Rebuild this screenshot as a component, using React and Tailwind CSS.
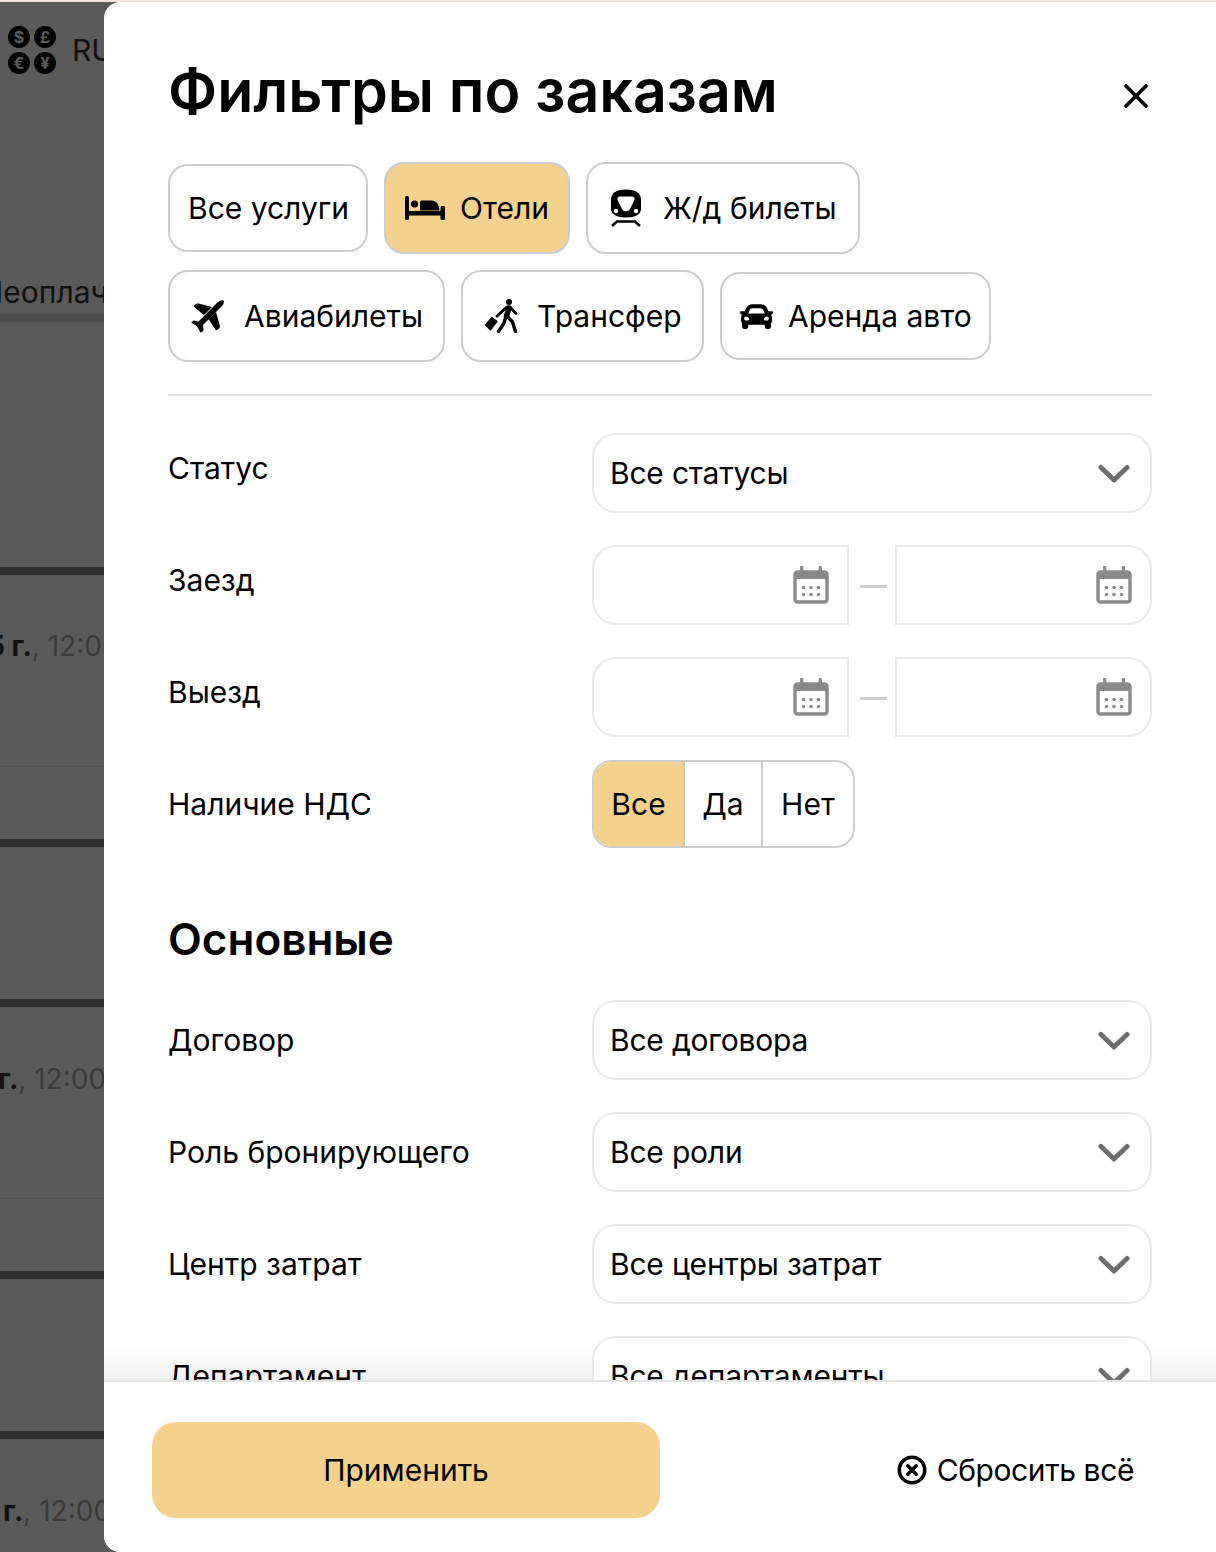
import React from "react";
import { FaCar } from "react-icons/fa";

const BedIcon = () => (
  <svg width="40" height="26" viewBox="0 0 40 26" fill="#000" className="shrink-0">
    <rect x="0" y="1" width="4" height="24" rx="1.5" />
    <rect x="0" y="16" width="40" height="4.5" />
    <rect x="35.5" y="11" width="4.5" height="14" rx="1.5" />
    <circle cx="9.5" cy="9" r="3.6" />
    <path d="M15 15.5V7.5C15 6 16 5.5 17.5 5.5H27C31 5.5 34 9 34.5 15.5Z" />
  </svg>
);

const TrainIcon = () => (
  <svg width="30" height="38" viewBox="10 4 30 38" fill="#000" className="shrink-0">
    <path d="M25 4.5C15 4.5 10 8 10 15V24C10 29 16 32.5 25 32.5C34 32.5 40 29 40 24V15C40 8 35 4.5 25 4.5Z" />
    <path d="M19 11.5H31C33 11.5 34 13 33.5 15L29 24C27.5 27 22.5 27 21 24L16.5 15C16 13 17 11.5 19 11.5Z" fill="#fff" />
    <circle cx="15" cy="26" r="2.2" fill="#fff" />
    <circle cx="35" cy="26" r="2.2" fill="#fff" />
    <path d="M11 41L16 36.5H34L39 41" stroke="#000" strokeWidth="2.6" fill="none" />
  </svg>
);

const PlaneIcon = () => (
  <svg width="34" height="34" viewBox="6 7 34 34" fill="#000" className="shrink-0">
    <path d="M38.5 8.5C36.5 7.5 34 9 32 11L11.5 31.5C10.5 32.8 11.5 35 13.5 35.5C15.5 35.5 17 34 18 33L37 14C38.8 12 39.5 10 38.5 8.5Z" />
    <path d="M27 15L13.5 11.5C11.5 11 9 12.5 8.5 14.5L19 23Z" />
    <path d="M31 20L35 34C35 36 33 38 31 38.5L23.5 27Z" />
    <path d="M16 30L9 28.5C7.5 28.8 6.5 30 6.5 31L13 34.5Z" />
    <path d="M18 32L18.5 38C18 39.5 16.5 40.5 15.5 40.5L12.5 35Z" />
  </svg>
);

const TransferIcon = () => (
  <svg width="34" height="34" viewBox="7 7 34 34" fill="none" className="shrink-0">
    <circle cx="31" cy="10" r="3" fill="#000" />
    <path d="M31 16L28.5 24" stroke="#000" strokeWidth="5.5" strokeLinecap="round" />
    <path d="M29 15L19 24" stroke="#000" strokeWidth="3" strokeLinecap="round" />
    <path d="M32 15L38 21.5" stroke="#000" strokeWidth="2.6" strokeLinecap="round" />
    <path d="M29 24L34.5 30L37.5 39.5" stroke="#000" strokeWidth="3.4" strokeLinecap="round" strokeLinejoin="round" />
    <path d="M28 24L26 31L20.5 39.5" stroke="#000" strokeWidth="3.4" strokeLinecap="round" strokeLinejoin="round" />
    <path d="M8 33L14 26L18.5 29.5L12.5 37.5Z" fill="#000" stroke="#000" strokeWidth="2" strokeLinejoin="round" />
  </svg>
);

const Calendar = () => (
  <svg width="36" height="38" viewBox="0 0 36 38" fill="none" className="shrink-0">
    <rect x="2" y="6" width="32" height="30" rx="2.5" stroke="#8a8a8a" strokeWidth="3.4" />
    <rect x="2" y="6" width="32" height="7" fill="#8a8a8a" />
    <rect x="7" y="0" width="3.4" height="7" rx="1" fill="#8a8a8a" />
    <rect x="25.6" y="0" width="3.4" height="7" rx="1" fill="#8a8a8a" />
    {[10.5, 18, 25.5].map((x) =>
      [21.5, 28.5].map((y) => <circle key={x + "-" + y} cx={x} cy={y} r="1.8" fill="#8a8a8a" />)
    )}
  </svg>
);

const Chevron = () => (
  <svg width="32" height="20" viewBox="0 0 32 20" fill="none" className="mt-[2px] shrink-0">
    <path d="M3 3.5L16 16L29 3.5" stroke="#6e6e6e" strokeWidth="5" strokeLinecap="round" strokeLinejoin="round" />
  </svg>
);

const Chip = ({ children, active, className = "" }) => (
  <div
    className={
      "flex items-center whitespace-nowrap rounded-[20px] border-2 border-[#cccccc] text-[30px] leading-none text-black " +
      (active ? "bg-[#f5d18e] " : "bg-white ") +
      className
    }
  >
    {children}
  </div>
);

const Row = ({ label, children, className = "", labelClass = "pt-[19px]" }) => (
  <div className={"flex items-start " + className}>
    <div className={"w-[424px] shrink-0 text-[30px] leading-[32px] text-black " + labelClass}>{label}</div>
    {children}
  </div>
);

const Select = ({ value }) => (
  <div className="relative z-10 flex h-20 w-[560px] items-center justify-between rounded-[24px] border-2 border-[#e8e8e8] bg-white pl-[16px] pr-[20px] text-[30px] text-black">
    <span className="pt-[1px] tracking-[-0.2px]">{value}</span>
    <Chevron />
  </div>
);

const DateRange = () => (
  <div className="flex w-[560px] items-center">
    <div className="flex h-20 w-[257px] shrink-0 items-center justify-end rounded-l-[24px] border-2 border-[#e8e8e8] pr-[18px]">
      <Calendar />
    </div>
    <div className="ml-[11px] mt-[2px] h-[3px] w-[27px] shrink-0 bg-[#cccccc]" />
    <div className="ml-auto flex h-20 w-[257px] shrink-0 items-center justify-end rounded-r-[24px] border-2 border-[#e8e8e8] pr-[18px]">
      <Calendar />
    </div>
  </div>
);

const Money = ({ s }) => (
  <span className="flex h-[22px] w-[22px] items-center justify-center rounded-full bg-black text-[16px] font-bold leading-none text-[#5b5b5b]">
    {s}
  </span>
);

const Backdrop = () => (
  <div className="flex h-[1552px] w-[104px] shrink-0 flex-col overflow-hidden bg-[#5a5a5a] font-['Inter',sans-serif] text-[30px] leading-none">
    <div className="h-[24px] shrink-0" />
    <div className="flex h-[48px] shrink-0 items-center pl-2">
      <div className="grid w-[48px] shrink-0 grid-cols-2 gap-[4px]">
        <Money s="$" />
        <Money s="£" />
        <Money s="€" />
        <Money s="¥" />
      </div>
      <span className="ml-[16px] text-[#111111]">RU</span>
    </div>
    <div className="mt-[203px] flex h-[30px] shrink-0 items-center overflow-hidden whitespace-nowrap text-[#111111]">
      <span className="ml-[-19px]">Неоплач</span>
    </div>
    <div className="mt-[7px] h-2 shrink-0 bg-[#4d4d4d]" />
    <div className="h-[245px] shrink-0" />
    <div className="h-2 shrink-0 bg-[#2f2f2f]" />
    <div className="flex h-[140px] shrink-0 items-center overflow-hidden whitespace-nowrap pt-[2px] text-[28px]">
      <span className="ml-[-13px] font-bold text-[#111111]">5 г.</span>
      <span className="text-[#3a3a3a]">, 12:00</span>
    </div>
    <div className="h-[52px] shrink-0 border-b border-[#525252]" />
    <div className="h-[72px] shrink-0" />
    <div className="h-2 shrink-0 bg-[#2f2f2f]" />
    <div className="h-[152px] shrink-0" />
    <div className="h-2 shrink-0 bg-[#2f2f2f]" />
    <div className="flex h-[140px] shrink-0 items-center overflow-hidden whitespace-nowrap pt-[3px] text-[28px]">
      <span className="ml-[-2px] font-bold text-[#111111]">г.</span>
      <span className="text-[#3a3a3a]">, 12:00</span>
    </div>
    <div className="h-[52px] shrink-0 border-b border-[#525252]" />
    <div className="h-[72px] shrink-0" />
    <div className="h-2 shrink-0 bg-[#2f2f2f]" />
    <div className="h-[152px] shrink-0" />
    <div className="h-2 shrink-0 bg-[#2f2f2f]" />
    <div className="flex h-[140px] shrink-0 items-center overflow-hidden whitespace-nowrap pl-[3px] pt-[3px] text-[28px]">
      <span className="font-bold text-[#111111]">г.</span>
      <span className="text-[#3a3a3a]">, 12:00</span>
    </div>
  </div>
);

export default function App() {
  return (
    <div className="flex h-[1552px] w-[1216px] flex-col overflow-hidden bg-[#5a5a5a] font-['Inter',sans-serif]">
      <div className="h-[2px] shrink-0 bg-[#f3e4e4]" />
      <div className="flex min-h-0 flex-1 overflow-hidden">
        <Backdrop />
        <div className="flex min-w-0 flex-1 flex-col overflow-hidden rounded-l-[16px] bg-white">
          <div className="relative min-h-0 flex-1 overflow-hidden pl-16 pr-16">
            <div className="flex h-[160px] items-start justify-between">
              <h1 className="mt-[53px] whitespace-nowrap text-[59px] font-semibold leading-[72px] text-black">Фильтры по заказам</h1>
              <svg width="26" height="26" viewBox="0 0 26 26" className="mr-[3px] mt-[81px] shrink-0" fill="none">
                <path d="M3 3L23 23M23 3L3 23" stroke="#000" strokeWidth="3.6" strokeLinecap="round" />
              </svg>
            </div>

            <div className="flex items-center gap-4">
              <Chip className="h-[88px] w-[200px] pl-[18px]">Все услуги</Chip>
              <Chip active className="h-[92px] w-[186px] gap-[15px] pl-[19px]">
                <BedIcon />
                Отели
              </Chip>
              <Chip className="h-[92px] w-[274px] gap-[22px] pl-[23px]">
                <TrainIcon />
                Ж/д билеты
              </Chip>
            </div>
            <div className="mt-4 flex items-center gap-4">
              <Chip className="h-[92px] w-[277px] gap-[19px] pl-[21px]">
                <PlaneIcon />
                Авиабилеты
              </Chip>
              <Chip className="h-[92px] w-[243px] gap-[18px] pl-[22px]">
                <TransferIcon />
                Трансфер
              </Chip>
              <Chip className="h-[88px] w-[271px] gap-[15px] pl-[18px]">
                <FaCar className="shrink-0 text-[33px]" />
                Аренда авто
              </Chip>
            </div>

            <div className="mt-[32px] h-[2px] bg-[#e5e5e5]" />

            <Row label="Статус" className="mt-[37px]">
              <Select value="Все статусы" />
            </Row>
            <Row label="Заезд" className="mt-8">
              <DateRange />
            </Row>
            <Row label="Выезд" className="mt-8">
              <DateRange />
            </Row>
            <Row label="Наличие НДС" className="mt-[23px]" labelClass="pt-[28px]">
              <div className="flex h-[88px] overflow-hidden rounded-[20px] border-2 border-[#cccccc] text-[30px] text-black">
                <div className="flex w-[89px] items-center justify-center bg-[#f5d18e]">Все</div>
                <div className="flex w-[78px] items-center justify-center border-l-2 border-[#cccccc]">Да</div>
                <div className="flex w-[92px] items-center justify-center border-l-2 border-[#cccccc]">Нет</div>
              </div>
            </Row>

            <h2 className="mt-[61px] text-[44px] font-semibold leading-[60px] text-black">Основные</h2>

            <Row label="Договор" className="mt-[31px]" labelClass="pt-[24px]">
              <Select value="Все договора" />
            </Row>
            <Row label="Роль бронирующего" className="mt-8" labelClass="pt-[24px]">
              <Select value="Все роли" />
            </Row>
            <Row label="Центр затрат" className="mt-8" labelClass="pt-[24px]">
              <Select value="Все центры затрат" />
            </Row>
            <Row label="Департамент" className="mt-8" labelClass="pt-[24px]">
              <Select value="Все департаменты" />
            </Row>

            <div className="pointer-events-none absolute inset-x-0 bottom-0 h-[36px] bg-gradient-to-b from-transparent to-[#0000000f]" />
          </div>

          <div className="flex h-[172px] shrink-0 items-start justify-between border-t-2 border-[#e5e5e5] bg-white pl-12 pr-[82px] pt-[40px]">
            <div className="flex h-24 w-[508px] items-center justify-center rounded-[24px] bg-[#f5d18e] text-[30px] text-black">
              Применить
            </div>
            <div className="mt-[30px] flex items-center gap-[10px] text-[30px] leading-9 tracking-[-0.4px] text-black">
              <svg width="30" height="30" viewBox="0 0 32 32" fill="none" className="shrink-0">
                <circle cx="16" cy="16" r="13.6" stroke="#000" strokeWidth="3.8" />
                <path d="M11.5 11.5L20.5 20.5M20.5 11.5L11.5 20.5" stroke="#000" strokeWidth="3.8" strokeLinecap="round" />
              </svg>
              Сбросить всё
            </div>
          </div>
        </div>
      </div>
    </div>
  );
}
